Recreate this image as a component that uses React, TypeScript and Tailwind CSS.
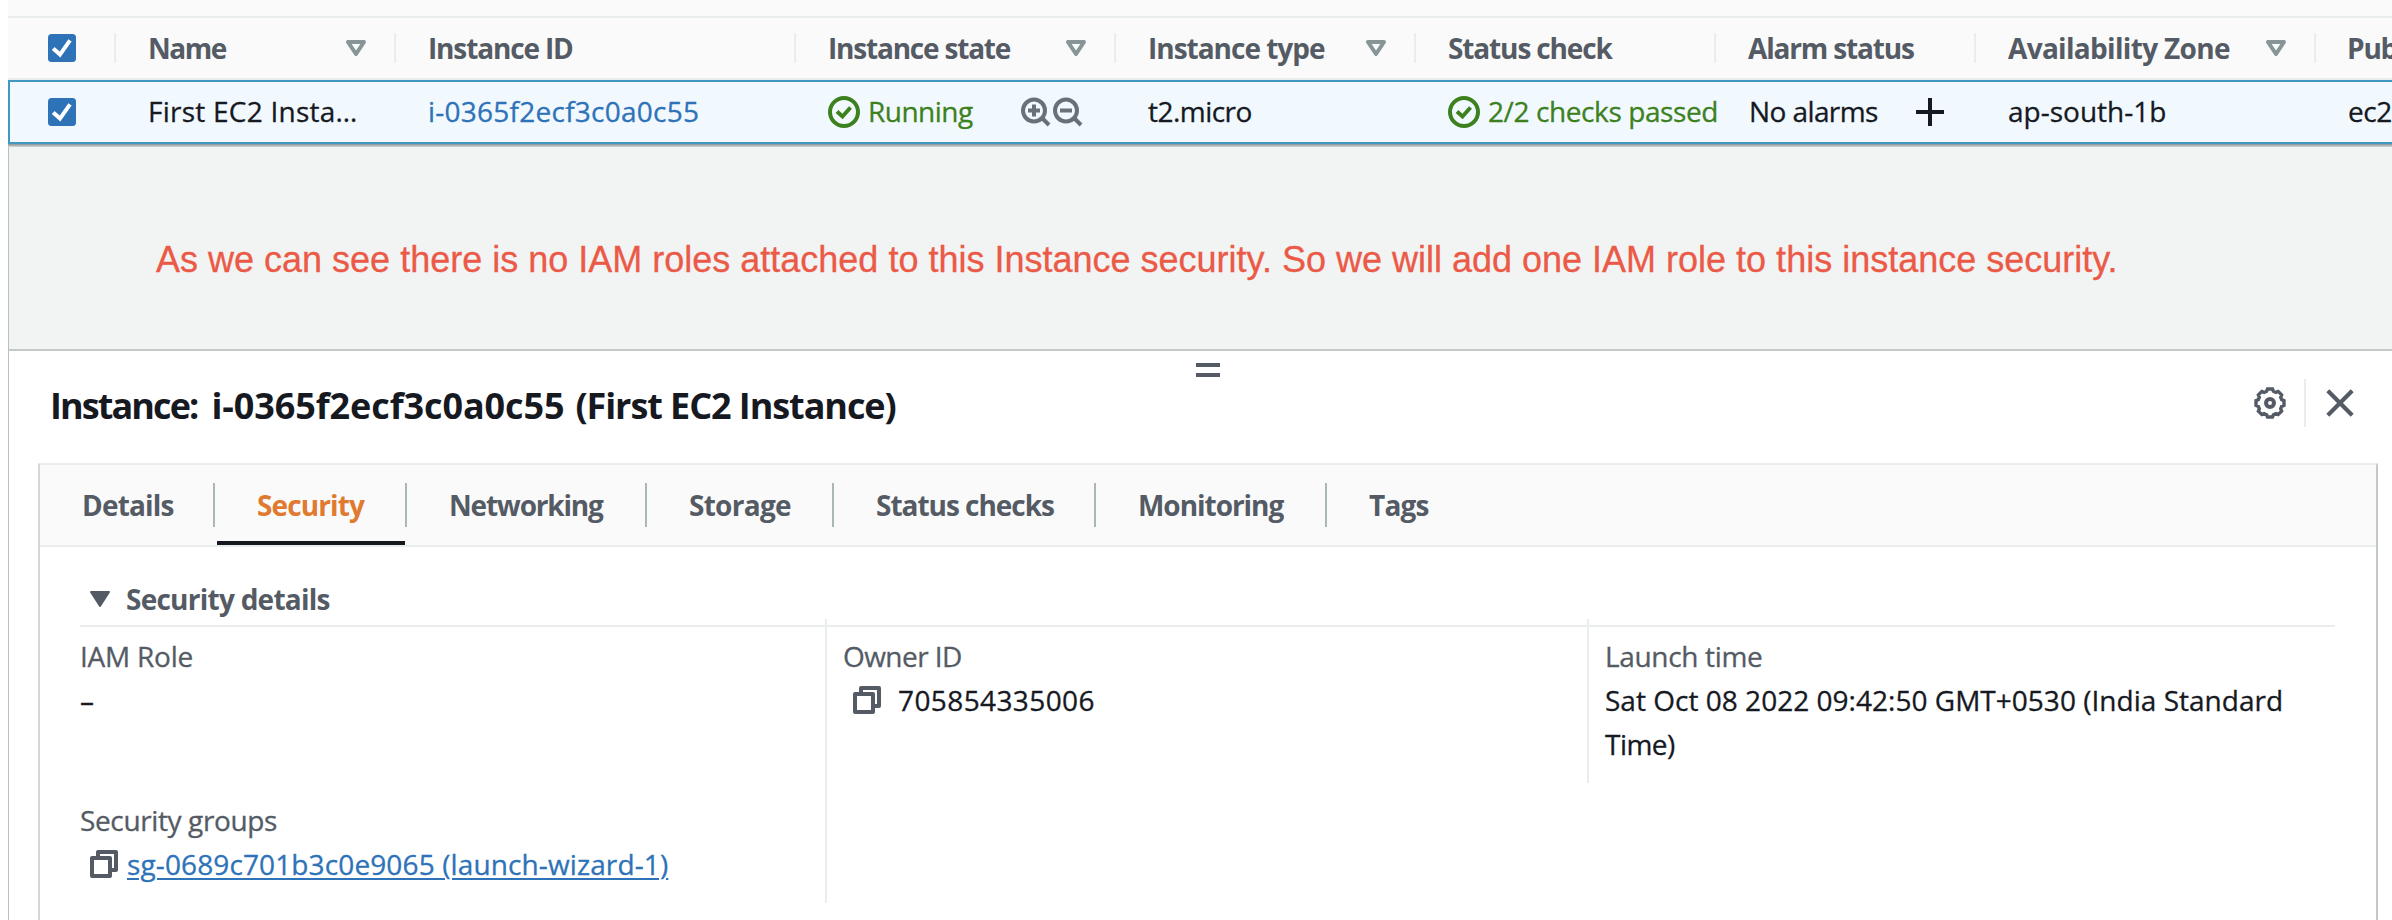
import type { ReactNode } from 'react';

function Checkbox() {
  return (
    <svg viewBox="0 0 28 28" className="block size-7 shrink-0">
      <rect width="28" height="28" rx="3.5" fill="#2e73b8" />
      <path d="M5.2 14.4 L12 20.6 L22 6.4" fill="none" stroke="#fff" strokeWidth="4" />
    </svg>
  );
}

function SortIcon() {
  return (
    <svg viewBox="0 0 20 16" className="block h-4 w-5 shrink-0">
      <path d="M2 2 H18 L10 14 Z" fill="none" stroke="#879596" strokeWidth="4" strokeLinejoin="round" />
    </svg>
  );
}

function StatusOk() {
  return (
    <svg viewBox="0 0 32 32" className="block size-8 shrink-0" fill="none" stroke="#3d811f" strokeWidth="4">
      <circle cx="16" cy="16" r="14" />
      <path d="M9 15.5 L14.5 20.5 L22.5 11.5" />
    </svg>
  );
}

function Magnifier({ plus }: { plus?: boolean }) {
  return (
    <svg viewBox="0 0 30 30" className="block size-[30px] shrink-0" fill="none" stroke="#687078" strokeWidth="4">
      <circle cx="13" cy="13.5" r="11" />
      <path d="M21 21 L28 28" />
      <path d={plus ? 'M7 13.5 H19 M13 7.5 V19.5' : 'M7 13.5 H19'} />
    </svg>
  );
}

function CopyIcon() {
  return (
    <svg viewBox="0 0 28 28" className="block size-7 shrink-0" fill="none" stroke="#545b64" strokeWidth="4" strokeLinejoin="round">
      <path d="M2 8 H20 V26 H2 Z" />
      <path d="M8 8 V2 H26 V20 H20" />
    </svg>
  );
}

function Gear() {
  const teeth = 8;
  const points: string[] = [];
  for (let i = 0; i < teeth; i++) {
    const steps: [number, number][] = [
      [-0.22, 14.2],
      [0.22, 14.2],
      [0.36, 12.2],
      [0.64, 12.2],
    ];
    for (const [offset, radius] of steps) {
      const angle = ((i + offset) / teeth) * Math.PI * 2;
      points.push(`${(16 + Math.sin(angle) * radius).toFixed(2)},${(16 - Math.cos(angle) * radius).toFixed(2)}`);
    }
  }
  return (
    <svg viewBox="0 0 32 32" className="block size-8 shrink-0" fill="none" stroke="#545b64">
      <polygon points={points.join(' ')} strokeWidth="3.4" />
      <circle cx="16" cy="16" r="4" strokeWidth="4" />
    </svg>
  );
}

function CloseIcon() {
  return (
    <svg viewBox="0 0 28 28" className="block size-7 shrink-0">
      <path d="M1.8 1.8 L26.2 26.2 M26.2 1.8 L1.8 26.2" fill="none" stroke="#545b64" strokeWidth="4.2" />
    </svg>
  );
}

const COLUMNS = [
  { label: 'Name', width: 'w-[280px]', text: 'tracking-[-1.5px]', sortable: true },
  { label: 'Instance ID', width: 'w-[400px]', text: 'tracking-[-1.15px]', sortable: false },
  { label: 'Instance state', width: 'w-[320px]', text: 'tracking-[-1.2px]', sortable: true },
  { label: 'Instance type', width: 'w-[300px]', text: 'tracking-[-1.01px]', sortable: true },
  { label: 'Status check', width: 'w-[300px]', text: 'tracking-[-1.13px]', sortable: false },
  { label: 'Alarm status', width: 'w-[260px]', text: 'tracking-[-1.16px]', sortable: false },
  { label: 'Availability Zone', width: 'w-[340px]', text: 'tracking-[-0.68px]', sortable: true },
];

const TABS = [
  { label: 'Details', width: 'w-[175px]', text: 'tracking-[-0.82px]' },
  { label: 'Security', width: 'w-[192px]', text: 'tracking-[-0.88px]' },
  { label: 'Networking', width: 'w-[240px]', text: 'tracking-[-1.2px]' },
  { label: 'Storage', width: 'w-[187px]', text: 'tracking-[-0.73px]' },
  { label: 'Status checks', width: 'w-[262px]', text: 'tracking-[-1.03px]' },
  { label: 'Monitoring', width: 'w-[231px]', text: 'tracking-[-1.04px]' },
  { label: 'Tags', width: 'w-[160px]', text: 'tracking-[-0.82px]' },
];

function Cell({ width, children }: { width: string; children: ReactNode }) {
  return <div className={`flex h-full shrink-0 items-center overflow-hidden pl-8 ${width}`}>{children}</div>;
}

function InstanceTable() {
  return (
    <div className="flex h-[147px] shrink-0 flex-col overflow-hidden">
      <div className="h-[18px] shrink-0 border-b-2 border-[#eaeded] bg-[#fafafa]" />
      <div className="flex h-[62px] shrink-0 items-center border-b-2 border-[#eaeded] bg-[#fafafa] font-bold text-[#545b64]">
        <div className="flex h-[30px] w-[108px] shrink-0 items-center border-r-2 border-[#eaeded] pl-10">
          <Checkbox />
        </div>
        {COLUMNS.map((c) => (
          <div
            key={c.label}
            className={`flex h-[30px] shrink-0 items-center justify-between border-r-2 border-[#eaeded] pr-7 pl-8 ${c.width}`}
          >
            <span className={`pb-px ${c.text}`}>{c.label}</span>
            {c.sortable && <SortIcon />}
          </div>
        ))}
        <span className="shrink-0 pb-px pl-[31px] tracking-[-1.2px]">Pub</span>
      </div>
      <div className="flex h-16 shrink-0 items-center border-y-2 border-l-2 border-[#4199c3] bg-[#f2f9fe] text-[#16191f] [-webkit-text-stroke:0.3px]">
        <div className="flex w-[106px] shrink-0 items-center pl-[38px]">
          <Checkbox />
        </div>
        <Cell width="w-[280px]">
          <span className="pb-0.5 tracking-[0.24px]">First EC2 Insta…</span>
        </Cell>
        <Cell width="w-[400px]">
          <span className="pb-0.5 tracking-[0.25px] text-[#2e73b8]">i-0365f2ecf3c0a0c55</span>
        </Cell>
        <Cell width="w-[320px]">
          <div className="flex items-center gap-2 text-[#3d811f]">
            <StatusOk />
            <span className="pb-0.5 tracking-[-0.51px]">Running</span>
          </div>
          <div className="ml-[48px] flex gap-0.5">
            <Magnifier plus />
            <Magnifier />
          </div>
        </Cell>
        <Cell width="w-[300px]">
          <span className="pb-0.5 tracking-[-0.53px]">t2.micro</span>
        </Cell>
        <Cell width="w-[301px]">
          <div className="flex items-center gap-2 text-[#3d811f]">
            <StatusOk />
            <span className="pb-0.5 tracking-[-0.4px]">2/2 checks passed</span>
          </div>
        </Cell>
        <Cell width="w-[259px]">
          <span className="w-[167px] pb-0.5 tracking-[-0.59px]">No alarms</span>
          <svg viewBox="0 0 28 28" className="block size-7 shrink-0">
            <path d="M0 14 H28 M14 0 V28" fill="none" stroke="#16191f" strokeWidth="4" />
          </svg>
        </Cell>
        <Cell width="w-[340px]">
          <span className="pb-0.5">ap-south-1b</span>
        </Cell>
        <span className="shrink-0 pb-0.5 pl-8 tracking-[-0.4px]">ec2</span>
      </div>
      <div className="h-[3px] shrink-0 bg-linear-to-b from-[#8a9294] to-[#d5d9d9]" />
    </div>
  );
}

function Details() {
  return (
    <div className="grid h-[284px] grid-cols-[747px_762px_1fr] leading-[44px] [-webkit-text-stroke:0.3px]">
      <div className="flex flex-col border-r-2 border-[#eaeded] pt-[15px]">
        <div className="h-11 tracking-[-0.24px] text-[#545b64]">IAM Role</div>
        <div className="h-[120px] text-[#16191f]">–</div>
        <div className="h-11 tracking-[-0.37px] text-[#545b64]">Security groups</div>
        <div className="flex h-11 items-center gap-[9px] pl-2.5">
          <CopyIcon />
          <span className="tracking-[0.12px] text-[#2e73b8] underline decoration-2 underline-offset-[3px]">
            sg-0689c701b3c0e9065 (launch-wizard-1)
          </span>
        </div>
      </div>
      <div className="flex h-[164px] flex-col border-r-2 border-[#eaeded] pt-[15px] pl-4">
        <div className="h-11 tracking-[-0.56px] text-[#545b64]">Owner ID</div>
        <div className="flex h-11 items-center gap-[17px] pl-2.5 text-[#16191f]">
          <CopyIcon />
          <span className="tracking-[0.4px]">705854335006</span>
        </div>
      </div>
      <div className="flex h-[164px] flex-col pt-[15px] pl-4">
        <div className="h-11 tracking-[-0.33px] text-[#545b64]">Launch time</div>
        <div className="w-[720px] whitespace-normal tracking-[0.02px] text-[#16191f]">
          Sat Oct 08 2022 09:42:50 GMT+0530 (India Standard <span className="tracking-[-0.53px]">Time)</span>
        </div>
      </div>
    </div>
  );
}

function TabsCard() {
  return (
    <div className="mr-[14px] ml-[29px] flex h-[457px] flex-col border-t-2 border-r-2 border-l-2 border-t-[#eaeded] border-r-[#c3c8ca] border-l-[#d3d7d8] bg-white">
      <div className="flex h-[82px] shrink-0 items-start border-b-2 border-[#eaeded] bg-[#fafafa] font-bold text-[#545b64]">
        {TABS.map((t, i) => (
          <div key={t.label} className={`relative flex h-20 shrink-0 items-center ${t.width}`}>
            <div
              className={
                i === TABS.length - 1
                  ? 'flex h-11 w-full items-center pl-[42px]'
                  : 'flex h-11 w-full items-center border-r-2 border-[#aab7b8] pl-[42px]'
              }
            >
              <span className={`${t.text} ${t.label === 'Security' ? 'text-[#e07a30]' : ''}`}>{t.label}</span>
            </div>
            {t.label === 'Security' && <div className="absolute bottom-0 left-0.5 h-1 w-[188px] bg-[#16191f]" />}
          </div>
        ))}
      </div>
      <div className="flex flex-col pr-[41px] pl-10">
        <div className="flex h-[72px] items-end pl-2.5">
          <div className="flex h-10 items-center gap-4">
            <svg viewBox="0 0 20 16" className="block h-4 w-5">
              <path d="M1 1 H19 L10 15 Z" fill="#545b64" stroke="#545b64" strokeWidth="2" strokeLinejoin="round" />
            </svg>
            <span className="font-bold tracking-[-0.75px] text-[#545b64]">Security details</span>
          </div>
        </div>
        <div className="mt-1.5 h-0.5 bg-[#eaeded]" />
        <div className="-mt-2">
          <Details />
        </div>
      </div>
    </div>
  );
}

function SplitPanel() {
  return (
    <div className="flex flex-1 flex-col border-t-2 border-[#c3c8ca] bg-white">
      <div className="flex h-[14px] shrink-0 flex-col items-center pl-[15px]">
        <div className="flex h-[26px] w-6 shrink-0 flex-col gap-1.5 pt-3">
          <div className="h-1 shrink-0 bg-[#545b64]" />
          <div className="h-1 shrink-0 bg-[#545b64]" />
        </div>
      </div>
      <div className="flex h-[98px] shrink-0 items-center justify-between pr-[38px] pl-[41px]">
        <h2 className="flex pb-4 text-[36px] leading-[50px] font-bold text-[#16191f]">
          <span className="tracking-[-1.9px]">Instance:</span>
          <span className="ml-[14px] tracking-[-0.1px]">i-0365f2ecf3c0a0c55</span>
          <span className="ml-[11px] tracking-[-1.07px]">(First EC2 Instance)</span>
        </h2>
        <div className="flex h-12 -translate-y-[11px] items-center">
          <Gear />
          <div className="mr-5 ml-[18px] h-12 w-0.5 bg-[#eaeded]" />
          <CloseIcon />
        </div>
      </div>
      <TabsCard />
    </div>
  );
}

export default function App() {
  return (
    <div className="flex h-[920px] w-[2392px] overflow-hidden bg-white pl-2 font-['Open_Sans','Noto_Sans',sans-serif] text-[28px] leading-[38px] whitespace-nowrap">
      <div className="flex min-w-0 flex-1 flex-col border-l border-[#b9bfc2] bg-[#f2f3f3]">
        <div className="-ml-px flex shrink-0 flex-col">
          <InstanceTable />
        </div>
        <div className="h-[202px] shrink-0 pt-[92px] pl-[147px] font-['Liberation_Sans',Arial,sans-serif] text-[36px] leading-[42px] text-[#eb5a46] [-webkit-text-stroke:0.3px]">
          As we can see there is no IAM roles attached to this Instance security. So we will add one IAM role to this instance
          security.
        </div>
        <SplitPanel />
      </div>
    </div>
  );
}
